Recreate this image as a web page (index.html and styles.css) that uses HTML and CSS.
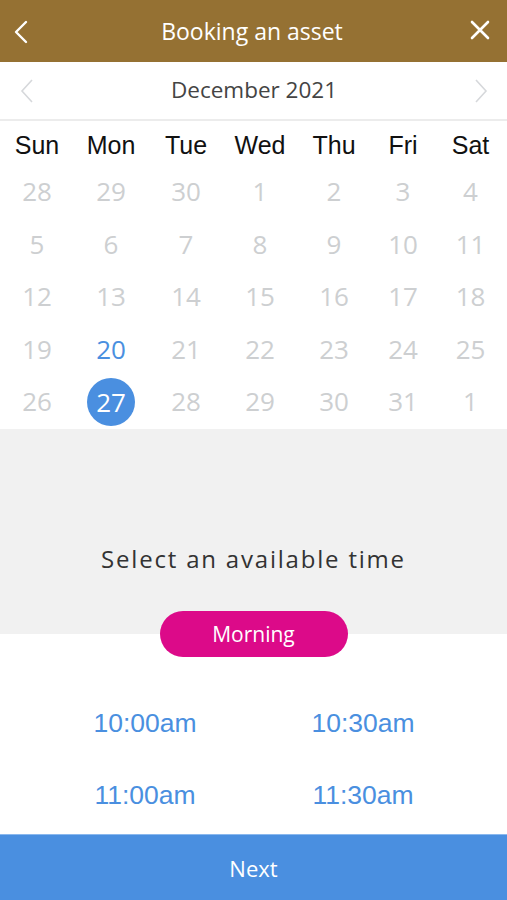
FILE: index.html
```html
<!DOCTYPE html>
<html>
<head>
<meta charset="utf-8">
<link rel="stylesheet" href="styles.css">
</head>
<body>
<div class="app">
  <header class="topbar">
    <svg class="back" width="16" height="24" viewBox="0 0 16 24"><path d="M13 2 L3 12 L13 22" fill="none" stroke="#fff" stroke-width="2.4" stroke-linecap="round" stroke-linejoin="round"/></svg>
    <h1 class="title">Booking an asset</h1>
    <svg class="close" width="22" height="22" viewBox="0 0 22 22"><path d="M3 3 L19 19 M19 3 L3 19" fill="none" stroke="#fff" stroke-width="2.6" stroke-linecap="round"/></svg>
  </header>
  <div class="month">
    <svg class="mnav" width="14" height="24" viewBox="0 0 14 24"><path d="M12 1 L2 12 L12 23" fill="none" stroke="#d6d8db" stroke-width="1.6"/></svg>
    <span class="month-label">December 2021</span>
    <svg class="mnav" width="14" height="24" viewBox="0 0 14 24"><path d="M2 1 L12 12 L2 23" fill="none" stroke="#d6d8db" stroke-width="1.6"/></svg>
  </div>
  <div class="cal">
    <div class="wd">Sun</div><div class="wd">Mon</div><div class="wd">Tue</div><div class="wd">Wed</div><div class="wd">Thu</div><div class="wd">Fri</div><div class="wd">Sat</div>
    <div class="d">28</div><div class="d">29</div><div class="d">30</div><div class="d">1</div><div class="d">2</div><div class="d">3</div><div class="d">4</div>
    <div class="d">5</div><div class="d">6</div><div class="d">7</div><div class="d">8</div><div class="d">9</div><div class="d">10</div><div class="d">11</div>
    <div class="d">12</div><div class="d">13</div><div class="d">14</div><div class="d">15</div><div class="d">16</div><div class="d">17</div><div class="d">18</div>
    <div class="d">19</div><div class="d today">20</div><div class="d">21</div><div class="d">22</div><div class="d">23</div><div class="d">24</div><div class="d">25</div>
    <div class="d">26</div><div class="d"><span class="sel">27</span></div><div class="d">28</div><div class="d">29</div><div class="d">30</div><div class="d">31</div><div class="d">1</div>
  </div>
  <section class="prompt">
    <p class="prompt-text">Select an available time</p>
  </section>
  <div class="pill-wrap"><span class="pill">Morning</span></div>
  <div class="slots">
    <span class="slot">10:00am</span><span class="slot">10:30am</span>
    <span class="slot">11:00am</span><span class="slot">11:30am</span>
  </div>
  <button class="next">Next</button>
</div>
</body>
</html>
```

FILE: styles.css
```css
* { box-sizing: border-box; }
html, body { margin: 0; padding: 0; background: #fff; }
body { font-family: "Open Sans", "Noto Sans", sans-serif; }
.app { width: 507px; height: 900px; display: flex; flex-direction: column; overflow: hidden; }

.topbar { height: 62px; background: #957133; display: grid; grid-template-columns: 1fr auto 1fr; align-items: center; padding: 0 16px 0 13px; flex: none; }
.back { margin-top: 2px; justify-self: start; }
.close { margin-top: -3px; justify-self: end; }
.title { margin: 0; font-size: 23px; font-weight: 400; color: #fff; letter-spacing: 0; }

.month { height: 59px; display: flex; align-items: center; justify-content: space-between; padding: 0 19px 0 20px; border-bottom: 2px solid #ececec; flex: none; }
.month-label { font-size: 22.5px; color: #444; margin-top: -2px; }

.cal { display: grid; grid-template-columns: 74px 74px 76px 72px 76px 62px 73px; grid-template-rows: 45px; grid-auto-rows: 52.5px; flex: none; }
.wd { font-family: "Liberation Sans", Arial, sans-serif; font-size: 25px; color: #111; display: flex; align-items: center; justify-content: center; padding-top: 3px; }
.d { font-size: 26px; color: #cdcfd1; display: flex; align-items: center; justify-content: center; padding-bottom: 2px; }
.d.today { color: #4a8fe0; }
.sel { width: 48px; height: 48px; border-radius: 50%; background: #4a8fe0; color: #fff; display: flex; align-items: center; justify-content: center; margin-top: 2px; }

.prompt { background: #f1f1f1; height: 205px; display: flex; align-items: flex-end; justify-content: center; flex: none; }
.prompt-text { margin: 0 0 59px; font-size: 24px; color: #333; letter-spacing: 1.8px; }

.pill-wrap { display: flex; justify-content: center; margin-top: -23px; flex: none; }
.pill { width: 188px; height: 46px; border-radius: 23px; background: #dc0a89; color: #fff; font-size: 21px; display: flex; align-items: center; justify-content: center; }

.slots { flex: 1; display: grid; grid-template-columns: 1fr 1fr; grid-template-rows: 72px 72px; align-content: start; padding: 31px 35px 0 36px; }
.slot { font-family: "Liberation Sans", Arial, sans-serif; font-size: 26.5px; color: #4a8fe0; display: flex; align-items: center; justify-content: center; }

.next { height: 66px; flex: none; border: 0; border-top: 1px solid #8ab8ee; background: #4a8fe0; color: #fff; font-family: "Open Sans", sans-serif; font-size: 22px; width: 100%; padding: 0; }
```
